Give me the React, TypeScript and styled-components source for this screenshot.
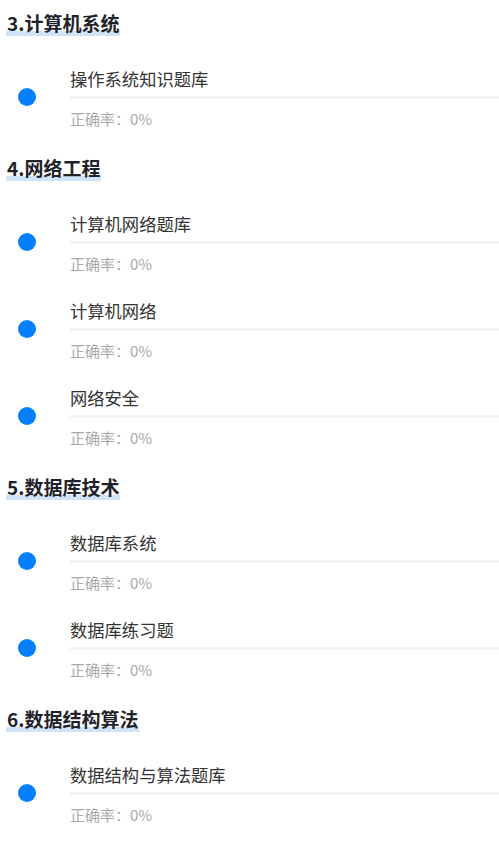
import styled, { createGlobalStyle } from "styled-components";

const GlobalStyle = createGlobalStyle`
  html, body {
    margin: 0;
    padding: 0;
    background: #ffffff;
  }
  body {
    font-family: "Noto Sans CJK SC", "Noto Sans", sans-serif;
  }
`;

interface Bank {
  name: string;
  rate: number;
}

interface Category {
  title: string;
  banks: Bank[];
}

const categories: Category[] = [
  { title: "3.计算机系统", banks: [{ name: "操作系统知识题库", rate: 0 }] },
  {
    title: "4.网络工程",
    banks: [
      { name: "计算机网络题库", rate: 0 },
      { name: "计算机网络", rate: 0 },
      { name: "网络安全", rate: 0 },
    ],
  },
  {
    title: "5.数据库技术",
    banks: [
      { name: "数据库系统", rate: 0 },
      { name: "数据库练习题", rate: 0 },
    ],
  },
  { title: "6.数据结构算法", banks: [{ name: "数据结构与算法题库", rate: 0 }] },
];

const Page = styled.div`
  display: flex;
  flex-direction: column;
  gap: 25px;
  padding-top: 10px;
  padding-bottom: 20px;
`;

const Section = styled.section`
  display: flex;
  flex-direction: column;
`;

const HeadingRow = styled.div`
  padding-left: 6px;
  height: 26px;
`;

const Heading = styled.span`
  display: inline-block;
  padding: 0 1px;
  font-size: 19px;
  line-height: 26px;
  font-weight: 700;
  color: #1f2329;
  background: linear-gradient(
    to top,
    #cfe4f8 0,
    #cfe4f8 5px,
    transparent 5px
  );
`;

const List = styled.div`
  display: flex;
  flex-direction: column;
  gap: 24px;
  margin-top: 31px;
`;

const Row = styled.div`
  display: flex;
  align-items: flex-start;
`;

const Dot = styled.span`
  flex: none;
  width: 18px;
  height: 18px;
  margin: 21px 34px 0 18px;
  border-radius: 50%;
  background: #0580fd;
`;

const Body = styled.div`
  flex: 1;
  display: flex;
  flex-direction: column;
`;

const Name = styled.div`
  font-size: 17.3px;
  line-height: 24px;
  color: #333333;
`;

const Track = styled.div`
  margin-top: 5px;
  height: 3px;
  background: #f3f3f3;
`;

const Fill = styled.div`
  height: 100%;
  background: #0580fd;
`;

const Rate = styled.div`
  margin-top: 9px;
  font-size: 15px;
  line-height: 22px;
  color: #a9a9a9;
`;

export default function App() {
  return (
    <>
      <GlobalStyle />
      <Page>
        {categories.map((cat) => (
          <Section key={cat.title}>
            <HeadingRow>
              <Heading>{cat.title}</Heading>
            </HeadingRow>
            <List>
              {cat.banks.map((bank) => (
                <Row key={bank.name}>
                  <Dot />
                  <Body>
                    <Name>{bank.name}</Name>
                    <Track>
                      <Fill style={{ width: `${bank.rate}%` }} />
                    </Track>
                    <Rate>正确率：{bank.rate}%</Rate>
                  </Body>
                </Row>
              ))}
            </List>
          </Section>
        ))}
      </Page>
    </>
  );
}
